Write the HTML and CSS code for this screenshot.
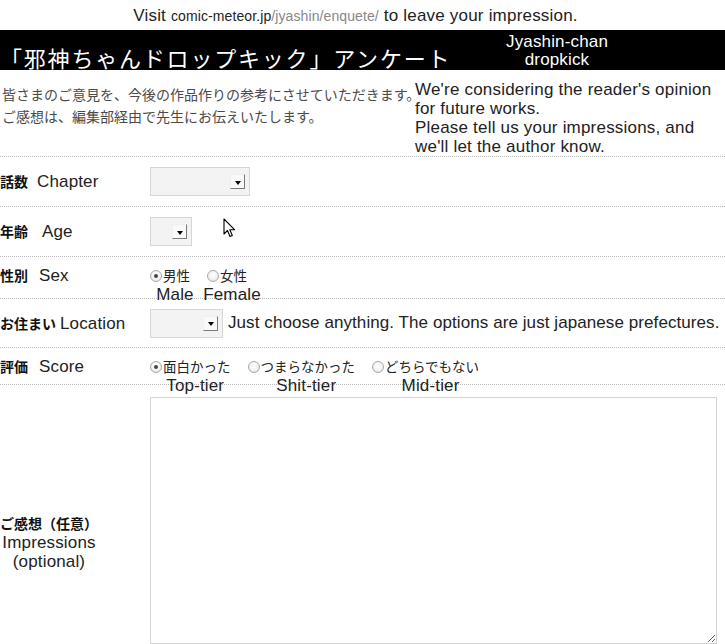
FILE: index.html
```html
<!DOCTYPE html>
<html lang="ja">
<head>
<meta charset="utf-8">
<title>アンケート</title>
<link rel="stylesheet" href="styles.css">
</head>
<body>
<div class="page">
  <div class="visit"><span>Visit</span> <span class="url"><span class="host">comic-meteor.jp</span><span class="path">/jyashin/enquete/</span></span> <span>to leave your impression.</span></div>

  <div class="titlebar">
    <h1 class="title">「邪神ちゃんドロップキック」アンケート</h1>
    <div class="title-en">Jyashin-chan<br>dropkick</div>
  </div>

  <div class="intro">
    <p class="intro-jp">皆さまのご意見を、今後の作品作りの参考にさせていただきます。<br>ご感想は、編集部経由で先生にお伝えいたします。</p>
    <p class="intro-en">We're considering the reader's opinion<br>for future works.<br>Please tell us your impressions, and<br>we'll let the author know.</p>
  </div>

  <div class="row row-chapter">
    <div class="label"><b class="jp">話数</b><span class="en en-chapter">Chapter</span></div>
    <div class="field"><div class="select select-chapter"><span class="drop"></span></div></div>
  </div>

  <div class="row row-age">
    <div class="label"><b class="jp">年齢</b><span class="en en-age">Age</span></div>
    <div class="field"><div class="select select-age"><span class="drop"></span></div></div>
  </div>

  <div class="row row-sex top">
    <div class="label"><b class="jp">性別</b><span class="en en-sex">Sex</span></div>
    <div class="field options">
      <label class="opt"><span class="opt-jp"><input type="radio" name="sex" checked><span>男性</span></span><span class="opt-en">Male</span></label>
      <label class="opt"><span class="opt-jp"><input type="radio" name="sex"><span>女性</span></span><span class="opt-en">Female</span></label>
    </div>
  </div>

  <div class="row row-location">
    <div class="label"><b class="jp">お住まい</b><span class="en en-location">Location</span></div>
    <div class="field"><div class="select select-location"><span class="drop"></span></div><span class="note">Just choose anything. The options are just japanese prefectures.</span></div>
  </div>

  <div class="row row-score top">
    <div class="label"><b class="jp">評価</b><span class="en en-score">Score</span></div>
    <div class="field options">
      <label class="opt"><span class="opt-jp"><input type="radio" name="score" checked><span>面白かった</span></span><span class="opt-en">Top-tier</span></label>
      <label class="opt"><span class="opt-jp"><input type="radio" name="score"><span>つまらなかった</span></span><span class="opt-en">Shit-tier</span></label>
      <label class="opt"><span class="opt-jp"><input type="radio" name="score"><span>どちらでもない</span></span><span class="opt-en">Mid-tier</span></label>
    </div>
  </div>

  <div class="row row-comment">
    <div class="label"><div class="label-stack"><b class="jp">ご感想（任意）</b><span class="en">Impressions</span><span class="en">(optional)</span></div></div>
    <div class="field comment-field"><textarea class="comment"></textarea></div>
  </div>

  <svg class="cursor" width="13" height="20" viewBox="0 0 13 20"><path d="M1 1 L1 16 L4.5 12.5 L7 18.5 L9.3 17.5 L6.8 11.7 L11.5 11.7 Z" fill="#fff" stroke="#000" stroke-width="1.1" stroke-linejoin="round"/></svg>
</div>
</body>
</html>
```

FILE: styles.css
```css
html, body {
  margin: 0;
  padding: 0;
  background: #fff;
}

.page {
  position: relative;
  width: 725px;
  font-family: "Liberation Sans", Arial, "Noto Sans CJK JP", sans-serif;
  color: #222;
  font-size: 17px;
  letter-spacing: 0.15px;
}

.visit {
  height: 30px;
  line-height: 32px;
  text-align: center;
  padding-right: 14px;
  white-space: nowrap;
  letter-spacing: 0.2px;
}

.url {
  font-size: 14px;
  letter-spacing: 0.1px;
}

.host {
  color: #222;
}

.path {
  color: #888;
}

.titlebar {
  height: 40px;
  background: #000;
  color: #fff;
  display: flex;
  align-items: flex-end;
}

.title {
  margin: 0;
  width: 460px;
  flex: 0 0 460px;
  font-family: "Noto Sans CJK JP", sans-serif;
  font-weight: 400;
  font-size: 22px;
  letter-spacing: 1.8px;
  line-height: 26px;
  white-space: nowrap;
}

.title-en {
  align-self: center;
  width: 130px;
  margin-left: 32px;
  text-align: center;
  line-height: 18px;
  font-size: 17px;
  padding-top: 1px;
}

.intro {
  display: flex;
  height: 86px;
  border-bottom: 1px dotted #bcbcbc;
}

.intro p {
  margin: 0;
}

.intro-jp {
  width: 413px;
  padding: 13px 0 0 2px;
  font-family: "Noto Sans CJK JP", sans-serif;
  font-size: 14px;
  line-height: 22px;
  color: #4a4a4a;
  letter-spacing: 0;
  white-space: nowrap;
}

.intro-en {
  padding-top: 10px;
  line-height: 19px;
  font-size: 17px;
  letter-spacing: 0.2px;
  white-space: nowrap;
}

.row {
  display: grid;
  grid-template-columns: 150px 1fr;
  align-items: center;
  border-bottom: 1px dotted #bcbcbc;
}

.row.top {
  align-items: start;
  padding-top: 8px;
  box-sizing: border-box;
}

.row-chapter { height: 49px; }
.row-age { height: 49px; }
.row-sex { height: 42px; }
.row-location { height: 48px; }
.row-score { height: 37px; }

.label {
  line-height: 20px;
  white-space: nowrap;
}

.jp {
  font-family: "Noto Sans CJK JP", sans-serif;
  font-weight: 700;
  font-size: 14px;
  color: #111;
  letter-spacing: 0;
}

.en {
  font-size: 17px;
  color: #222;
}

.en-chapter { margin-left: 9px; }
.en-age { margin-left: 14px; }
.en-sex { margin-left: 11px; }
.en-location { margin-left: 4px; }
.en-score { margin-left: 11px; }

.field {
  display: flex;
  align-items: center;
}

.select {
  box-sizing: border-box;
  height: 29px;
  background: #f3f3f3;
  border: 1px solid #d6d6d6;
  display: flex;
  justify-content: flex-end;
  align-items: center;
  padding-right: 4px;
  flex: 0 0 auto;
}

.select-chapter { width: 100px; }
.select-age { width: 42px; }
.select-location { width: 73px; }

.drop {
  box-sizing: border-box;
  width: 15px;
  height: 15px;
  background: #f9f9f9;
  border: 1px solid;
  border-color: #f0f0f0 #7a7a7a #7a7a7a #f0f0f0;
  display: flex;
  justify-content: center;
  align-items: center;
}

.drop::after {
  content: "";
  width: 0;
  height: 0;
  margin-top: 2px;
  border-left: 3px solid transparent;
  border-right: 3px solid transparent;
  border-top: 4px solid #000;
}

.note {
  margin-left: 5px;
  white-space: nowrap;
  font-size: 17px;
  letter-spacing: 0.08px;
}

.options {
  align-items: flex-start;
  gap: 17px;
}

.opt {
  display: flex;
  flex-direction: column;
  align-items: center;
}

.opt-jp {
  display: flex;
  align-items: center;
  height: 20px;
  font-family: "Noto Sans CJK JP", sans-serif;
  font-size: 13.5px;
  color: #222;
  letter-spacing: 0;
  white-space: nowrap;
}

.opt-jp input {
  appearance: none;
  -webkit-appearance: none;
  box-sizing: border-box;
  width: 12px;
  height: 12px;
  margin: 1px 1px 0 0;
  border: 1px solid #a8a8a8;
  border-radius: 50%;
  background: radial-gradient(circle at 50% 40%, #fff 0%, #f2f2f2 55%, #dcdcdc 100%);
  display: grid;
  place-items: center;
}

.opt-jp input:checked::after {
  content: "";
  width: 4px;
  height: 4px;
  border-radius: 50%;
  background: #444;
}

.opt-en {
  line-height: 20px;
  font-size: 17px;
  white-space: nowrap;
  margin-left: -25px;
  margin-right: -35px;
}

.label-stack {
  display: inline-flex;
  flex-direction: column;
  align-items: center;
  line-height: 19px;
}

.comment-field {
  padding: 12px 0 55px;
}

.comment {
  box-sizing: border-box;
  display: block;
  width: 567px;
  height: 247px;
  margin: 0;
  border: 1px solid #d4d4d4;
  background: #fff;
  resize: both;
}

.cursor {
  position: absolute;
  left: 223px;
  top: 218px;
}
```
